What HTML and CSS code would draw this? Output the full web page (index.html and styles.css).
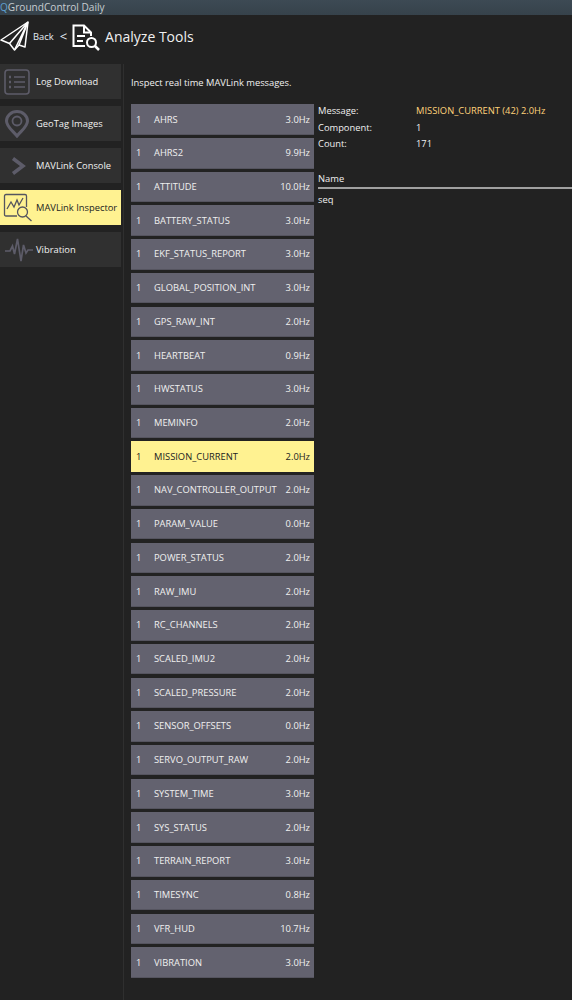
FILE: index.html
```html
<!DOCTYPE html>
<html lang="en">
<head>
    <meta charset="UTF-8">
    <title>QGroundControl Daily</title>
    <link rel="stylesheet" href="styles.css">
</head>
<body>
    <div class="titlebar"><span class="q">Q</span>GroundControl Daily</div>

    <div class="header">
        <svg class="plane" width="30" height="30" viewBox="0 0 30 30" fill="none" stroke="#fff" stroke-width="1.5" stroke-linejoin="round">
            <path d="M28 1 L1 19 L9.5 22.5 L14.5 29 L19 24 L25 26 Z"/>
            <path d="M28 1 L9.5 22.5 M28 1 L14.5 29 M28 1 L19 24"/>
        </svg>
        <span class="back">Back</span>
        <span class="chevron">&lt;</span>
        <svg class="doc" width="28" height="28" viewBox="0 0 28 28" fill="none" stroke="#fff" stroke-width="2">
            <path d="M13 22 H1.5 V1.5 H12 L19 8.5 V12"/>
            <path d="M12 1.5 V8.5 H19"/>
            <path d="M5 12 H13 M5 17 H11"/>
            <circle cx="19.5" cy="18.5" r="4.5"/>
            <path d="M23 22 L27 26" stroke-width="2.5"/>
        </svg>
        <span class="page-title">Analyze Tools</span>
    </div>

    <div class="main">
        <div class="sidebar">
            <div class="nav-btn">
                <svg class="nav-icon" width="26" height="26" viewBox="0 0 26 26" fill="none" stroke="#5d5c69" stroke-width="1.6">
                    <rect x="1" y="1" width="24" height="24" rx="3"/>
                    <path d="M10 8 H21 M10 13 H21 M10 18 H21"/>
                    <path d="M5 8 H7 M5 13 H7 M5 18 H7" stroke-width="2.4"/>
                </svg>
                <span>Log Download</span>
            </div>
            <div class="nav-btn">
                <svg class="nav-icon" width="26" height="28" viewBox="0 0 26 28" fill="none" stroke="#5d5c69" stroke-width="3">
                    <path d="M13 26 C8 20 2.5 16.5 2.5 11 A10.5 9.5 0 0 1 23.5 11 C23.5 16.5 18 20 13 26 Z"/>
                    <circle cx="13" cy="11" r="4.5" stroke-width="1.8"/>
                </svg>
                <span>GeoTag Images</span>
            </div>
            <div class="nav-btn">
                <svg class="nav-icon" width="26" height="18" viewBox="0 0 26 18" fill="none" stroke="#5d5c69" stroke-width="3.5">
                    <path d="M9 1.5 L19 9 L9 16.5"/>
                </svg>
                <span>MAVLink Console</span>
            </div>
            <div class="nav-btn active">
                <svg class="nav-icon" width="30" height="30" viewBox="0 0 30 30" fill="none" stroke="#55555f" stroke-width="1.3">
                    <path d="M14 23 H3 Q1.5 23 1.5 21.5 V3 Q1.5 1.5 3 1.5 H22 Q23.5 1.5 23.5 3 V14"/>
                    <path d="M4 16 L8 9 L11 14 L14 7 L16 12 L20 5"/>
                    <circle cx="19.5" cy="19" r="5"/>
                    <path d="M23 23 L28.5 28"/>
                </svg>
                <span>MAVLink Inspector</span>
            </div>
            <div class="nav-btn">
                <svg class="nav-icon" width="30" height="26" viewBox="0 0 30 26" fill="none" stroke="#5d5c69" stroke-width="1.7">
                    <path d="M1 14 H6 L8.5 9 L10.5 17 L13.5 2 L17 24 L19.5 8 L22 16 L24 13 H29"/>
                </svg>
                <span>Vibration</span>
            </div>
        </div>

        <div class="content">
            <div class="hint">Inspect real time MAVLink messages.</div>
            <div class="panels">
                <div class="msg-list" id="msg-list"></div>
                <div class="details">
                    <div class="info-row"><span class="info-label">Message:</span><span class="selected-msg">MISSION_CURRENT (42) 2.0Hz</span></div>
                    <div class="info-row"><span class="info-label">Component:</span><span>1</span></div>
                    <div class="info-row"><span class="info-label">Count:</span><span>171</span></div>
                    <div class="field-head">Name</div>
                    <div class="field-row">seq</div>
                </div>
            </div>
        </div>
    </div>

    <script>
        // daftar pesan
        const messages = [
            ['AHRS', '3.0Hz'], ['AHRS2', '9.9Hz'], ['ATTITUDE', '10.0Hz'], ['BATTERY_STATUS', '3.0Hz'],
            ['EKF_STATUS_REPORT', '3.0Hz'], ['GLOBAL_POSITION_INT', '3.0Hz'], ['GPS_RAW_INT', '2.0Hz'],
            ['HEARTBEAT', '0.9Hz'], ['HWSTATUS', '3.0Hz'], ['MEMINFO', '2.0Hz'], ['MISSION_CURRENT', '2.0Hz'],
            ['NAV_CONTROLLER_OUTPUT', '2.0Hz'], ['PARAM_VALUE', '0.0Hz'], ['POWER_STATUS', '2.0Hz'],
            ['RAW_IMU', '2.0Hz'], ['RC_CHANNELS', '2.0Hz'], ['SCALED_IMU2', '2.0Hz'], ['SCALED_PRESSURE', '2.0Hz'],
            ['SENSOR_OFFSETS', '0.0Hz'], ['SERVO_OUTPUT_RAW', '2.0Hz'], ['SYSTEM_TIME', '3.0Hz'],
            ['SYS_STATUS', '2.0Hz'], ['TERRAIN_REPORT', '3.0Hz'], ['TIMESYNC', '0.8Hz'], ['VFR_HUD', '10.7Hz'],
            ['VIBRATION', '3.0Hz']
        ];
        let html = '';
        messages.forEach(m => {
            const cls = m[0] === 'MISSION_CURRENT' ? 'msg active' : 'msg';
            html += `<div class="${cls}"><span class="msg-comp">1</span><span class="msg-name">${m[0]}</span><span class="msg-rate">${m[1]}</span></div>`;
        });
        document.getElementById('msg-list').innerHTML = html;
    </script>
</body>
</html>
```

FILE: styles.css
```css
html, body {
    margin: 0;
    height: 1000px;
    overflow: hidden;
}
body {
    background: #222222;
    color: #f0f0f0;
    font-family: "Open Sans", sans-serif;
    font-size: 9.35px;
}
.titlebar {
    height: 15px;
    line-height: 15px;
    background: linear-gradient(#3d4a54, #36424b);
    color: #c6ccd0;
    font-size: 10.1px;
    white-space: nowrap;
}
.q {
    color: #5d9fd0;
}
.header {
    height: 49px;
    display: flex;
    align-items: center;
    padding-bottom: 7px;
    box-sizing: border-box;
}
.plane {
    margin-right: 3px;
    margin-top: -1px;
}
.back {
    margin-top: 1px;
    color: #e4ecf4;
}
.chevron {
    margin-left: 6px;
    font-size: 13px;
    margin-top: -1px;
    color: #e4ecf4;
}
.doc {
    margin-left: 5px;
    margin-top: 3px;
}
.page-title {
    margin-left: 5px;
    font-size: 14px;
}
.main {
    display: flex;
}
.sidebar {
    width: 121px;
    padding-right: 2px;
    border-right: 1px solid #2f2f2f;
    height: 936px;
    display: flex;
    flex-direction: column;
    gap: 7px;
}
.nav-btn {
    height: 35px;
    background: #303030;
    display: flex;
    align-items: center;
    position: relative;
    padding-left: 36px;
    box-sizing: border-box;
}
.nav-btn.active {
    background: #fff291;
    color: #222;
}
.nav-icon {
    position: absolute;
    left: 4px;
    top: 50%;
    transform: translateY(-50%);
}
.nav-btn.active .nav-icon {
    left: 3px;
}
.content {
    flex: 1;
    padding-left: 7px;
    min-width: 0;
}
.hint {
    height: 40.3px;
    line-height: 37px;
}
.panels {
    display: flex;
}
.msg-list {
    width: 183px;
    flex: none;
    display: flex;
    flex-direction: column;
    gap: 3.22px;
}
.msg {
    height: 30.5px;
    box-sizing: border-box;
    background: #63626f;
    border-bottom: 1px solid #55545f;
    display: flex;
    align-items: center;
    padding: 0 4px 0 5px;
}
.msg.active {
    background: #fff291;
    border-bottom-color: #fff291;
    color: #222;
}
.msg-comp {
    width: 18px;
}
.msg-name {
    flex: 1;
    white-space: nowrap;
}
.details {
    flex: 1;
    padding-left: 4px;
}
.info-row {
    display: flex;
    height: 16.3px;
    line-height: 14px;
}
.info-label {
    width: 98px;
}
.selected-msg {
    color: #ffd27a;
}
.field-head {
    margin-top: 18px;
    height: 16px;
    line-height: 16px;
    border-bottom: 2px solid #a0a0a0;
}
.field-row {
    line-height: 21px;
}
```
